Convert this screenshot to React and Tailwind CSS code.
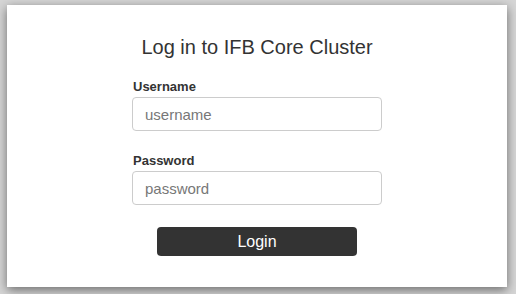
import React from 'react';

export default function App() {
  return (
    <div className="w-[516px] h-[294px] bg-[#d6d6d6] pt-[5px] pl-[7px] font-['Liberation_Sans',Arial,sans-serif]">
      <div className="w-[500px] h-[282px] bg-white shadow-[0_3px_10px_rgba(0,0,0,0.5)] flex flex-col items-center">
        <h1 className="mt-[30px] text-[20px] leading-[24px] text-[#333]">Log in to IFB Core Cluster</h1>

        <form className="w-[250px] mt-[20px] flex flex-col">
          <label className="text-[13px] leading-[16px] font-bold text-[#333] ml-[1px]">Username</label>
          <input
            type="text"
            placeholder="username"
            className="mt-[2px] h-[34px] w-[250px] rounded-[4px] border border-[#ccc] px-[12px] text-[15px] placeholder:text-[#777] outline-none"
          />

          <label className="mt-[22px] text-[13px] leading-[16px] font-bold text-[#333] ml-[1px]">Password</label>
          <input
            type="password"
            placeholder="password"
            className="mt-[2px] h-[34px] w-[250px] rounded-[4px] border border-[#ccc] px-[12px] text-[15px] placeholder:text-[#777] outline-none"
          />

          <button
            type="button"
            className="mt-[22px] self-center w-[200px] h-[29px] rounded-[4px] bg-[#333] text-white text-[16px]"
          >
            Login
          </button>
        </form>
      </div>
    </div>
  );
}
